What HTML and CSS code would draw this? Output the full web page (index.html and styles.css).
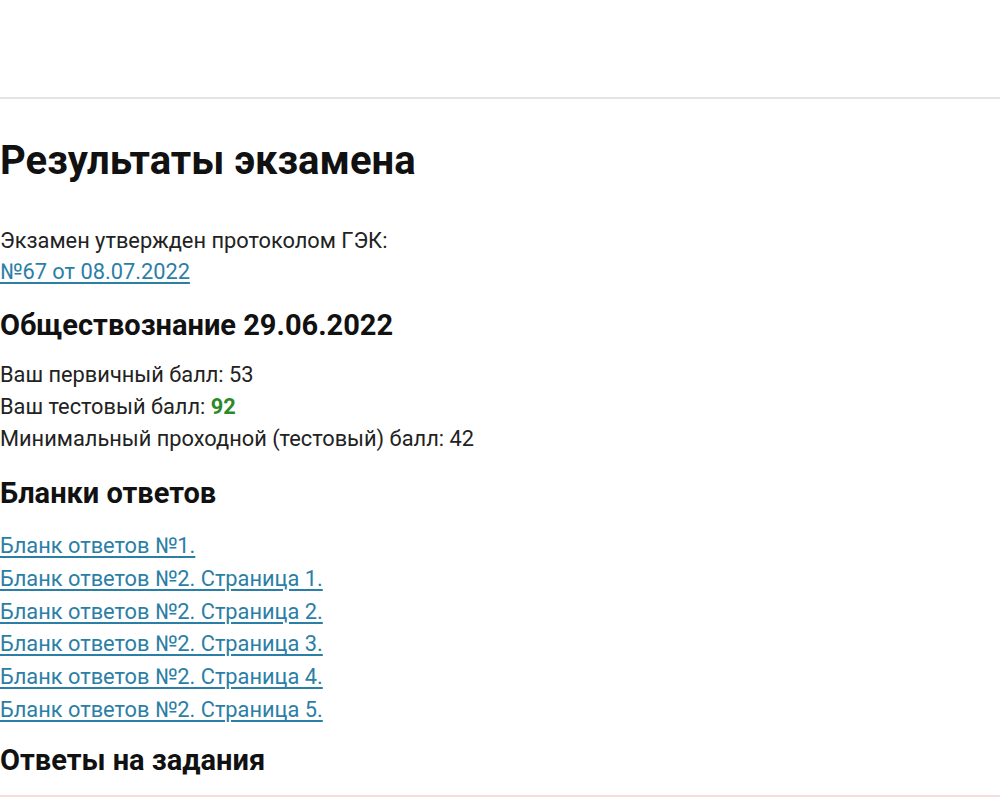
FILE: index.html
```html
<!DOCTYPE html>
<html lang="ru">
<head>
<meta charset="utf-8">
<link rel="stylesheet" href="styles.css">
</head>
<body>
<header class="top"></header>
<main class="content">
  <h1 class="title">Результаты экзамена</h1>
  <div class="protocol">
    <div>Экзамен утвержден протоколом ГЭК:</div>
    <a class="link" href="#">№67 от 08.07.2022</a>
  </div>
  <h2 class="sub">Обществознание 29.06.2022</h2>
  <div class="scores">
    <div>Ваш первичный балл: 53</div>
    <div>Ваш тестовый балл: <b class="good">92</b></div>
    <div>Минимальный проходной (тестовый) балл: 42</div>
  </div>
  <h2 class="sub">Бланки ответов</h2>
  <ul class="blanks">
    <li><a class="link" href="#">Бланк ответов №1.</a></li>
    <li><a class="link" href="#">Бланк ответов №2. Страница 1.</a></li>
    <li><a class="link" href="#">Бланк ответов №2. Страница 2.</a></li>
    <li><a class="link" href="#">Бланк ответов №2. Страница 3.</a></li>
    <li><a class="link" href="#">Бланк ответов №2. Страница 4.</a></li>
    <li><a class="link" href="#">Бланк ответов №2. Страница 5.</a></li>
  </ul>
  <h2 class="sub sub-last">Ответы на задания</h2>
  <div class="answers"></div>
</main>
</body>
</html>
```
FILE: styles.css
```css
html, body {
  margin: 0;
  padding: 0;
  background: #fff;
}
body {
  font-family: Roboto, "Noto Sans", sans-serif;
  color: #222;
  font-size: 21.8px;
  line-height: 32px;
  overflow: hidden;
  height: 797px;
}
.top {
  height: 97px;
  border-bottom: 2px solid #e4e4e4;
}
.content {
  padding: 0;
}
.title {
  margin: 40px 0 42px;
  font-size: 40px;
  line-height: 44px;
  font-weight: 700;
  color: #111;
}
.protocol {
  line-height: 31px;
}
.link {
  color: #2b7ea6;
  text-decoration: underline;
  text-underline-offset: 3px;
}
.sub {
  margin: 22px 0 18px;
  font-size: 29px;
  line-height: 32px;
  font-weight: 700;
  color: #111;
}
.sub-last {
  margin-top: 17px;
}
.good {
  color: #2a8a2a;
  font-weight: 700;
}
.blanks {
  list-style: none;
  margin: 0;
  padding: 3px 0 0;
}
.blanks li {
  line-height: 32.8px;
}
.answers {
  margin-top: 19px;
  border-top: 2px solid #f6dede;
}
```
